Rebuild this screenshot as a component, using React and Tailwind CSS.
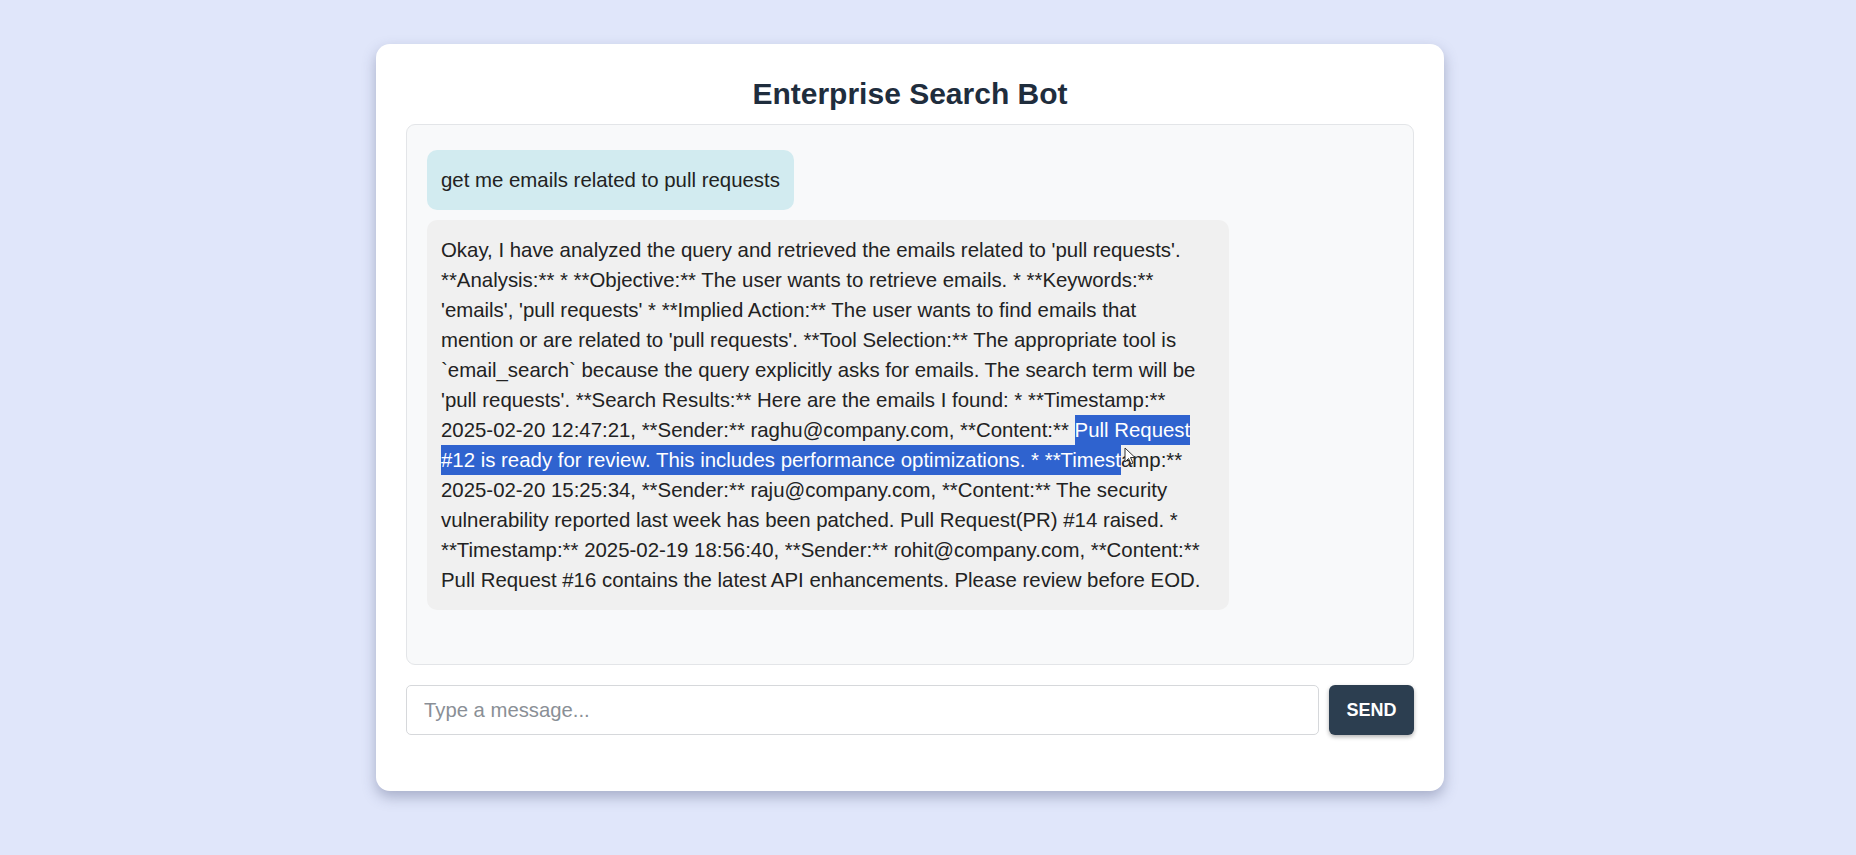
import React from 'react';

const font = { fontFamily: '"Liberation Sans", Arial, sans-serif' };

function Cursor() {
    return (
        <svg className="absolute left-[1124px] top-[447px]" width="12" height="18" viewBox="0 0 12 18">
            <path d="M1 1 L1 15 L4.5 11.5 L7 17 L9 16 L6.5 10.5 L11 10.5 Z" fill="#ffffff" stroke="#333" strokeWidth="1" strokeLinejoin="round" />
        </svg>
    );
}

export default function App() {
    return (
        <div className="relative min-h-[855px] w-full bg-[#e0e6fa] pt-[44px]" style={font}>
            <div className="ml-[376px] w-[1068px] h-[747px] bg-white rounded-[14px] shadow-[0_6px_14px_rgba(60,70,110,0.35)] px-[30px] pt-[20px]">
                <h1 className="text-center text-[30px] font-bold text-[#1f2d3d] leading-[60px]">Enterprise Search Bot</h1>
                <div className="h-[541px] bg-[#f8f9fa] border border-[#e3e5e8] rounded-[9px] pt-[25px] pl-[20px] flex flex-col items-start gap-[10px]">
                    <div className="bg-[#d2ebf0] rounded-[10px] px-[14px] py-[15px] text-[20.4px] leading-[30px] text-[#222]">
                        get me emails related to pull requests
                    </div>
                    <div className="w-[802px] bg-[#f0f0f0] rounded-[10px] pl-[14px] pr-[22px] py-[15px] text-[20.4px] leading-[30px] text-[#222]">
                        Okay, I have analyzed the query and retrieved the emails related to 'pull requests'. **Analysis:** * **Objective:** The user wants to retrieve emails. * **Keywords:** 'emails', 'pull requests' * **Implied Action:** The user wants to find emails that mention or are related to 'pull requests'. **Tool Selection:** The appropriate tool is `email_search` because the query explicitly asks for emails. The search term will be 'pull requests'. **Search Results:** Here are the emails I found: * **Timestamp:** 2025-02-20 12:47:21, **Sender:** raghu@company.com, **Content:**{' '}
                        <span className="bg-[#2f63cf] text-white py-[4px]">Pull Request #12 is ready for review. This includes performance optimizations. * **Timest</span>amp:** 2025-02-20 15:25:34, **Sender:** raju@company.com, **Content:** The security vulnerability reported last week has been patched. Pull Request(PR) #14 raised. * **Timestamp:** 2025-02-19 18:56:40, **Sender:** rohit@company.com, **Content:** Pull Request #16 contains the latest API enhancements. Please review before EOD.
                    </div>
                </div>
                <div className="mt-[20px] flex gap-[10px]">
                    <input
                        className="flex-1 h-[50px] border border-[#d6d8db] rounded-[5px] px-[17px] text-[20.3px] text-[#222] placeholder-[#8a8f96] outline-none bg-white"
                        placeholder="Type a message..."
                        style={font}
                    />
                    <button className="w-[85px] h-[50px] bg-[#2c3e50] text-white text-[18px] font-semibold rounded-[6px] shadow-[0_2px_4px_rgba(0,0,0,0.3)]" style={font}>
                        SEND
                    </button>
                </div>
            </div>
            <Cursor />
        </div>
    );
}
